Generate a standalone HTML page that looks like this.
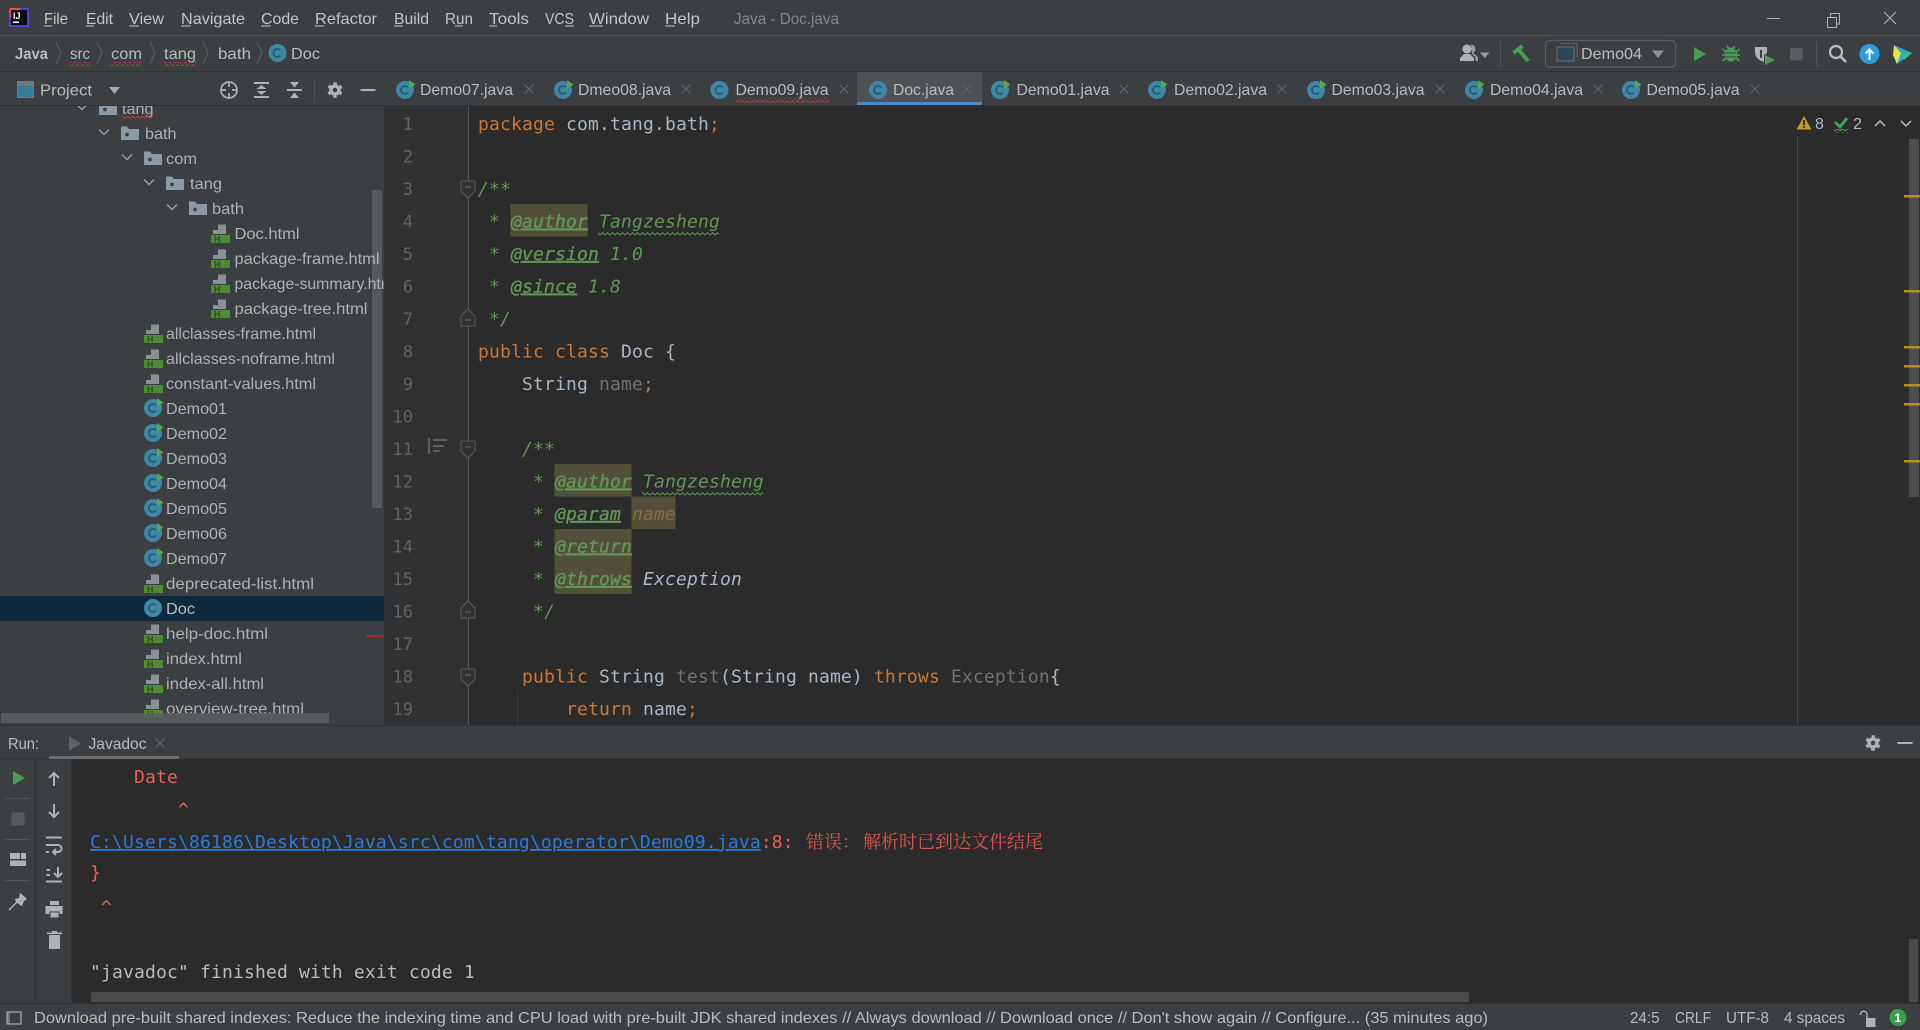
<!DOCTYPE html>
<html lang="en">
<head>
<meta charset="utf-8">
<title>Java - Doc.java</title>
<style>
html,body{margin:0;padding:0;width:1920px;height:1030px;overflow:hidden;background:#3c3f41}
svg{display:block;position:absolute;left:0;top:0}
text{font-family:"Liberation Sans","Noto Sans CJK SC",sans-serif;font-size:16px;fill:#bbbbbb;white-space:pre}
.m{fill:#c2c4c6}
.tr{fill:#afb1b3}
.hh{font-size:9px;font-weight:bold;fill:#2c4f20}
.code,.code tspan{font-family:"DejaVu Sans Mono","Liberation Mono",monospace;font-size:18px;letter-spacing:.16px}
.code{fill:#a9b7c6}
.k{fill:#cc7832}
.d{fill:#629755;font-style:italic}
.tag{fill:#629755;font-style:italic;stroke:#629755;stroke-width:.35px;text-decoration:underline}
.g{fill:#6f7275}
.ln{font-family:"DejaVu Sans Mono","Liberation Mono",monospace;font-size:17px;fill:#606366;text-anchor:end}
.red,.red tspan{fill:#f55b55}
.link{fill:#287bde;text-decoration:underline}
</style>
</head>
<body>
<svg width="1920" height="1030" viewBox="0 0 1920 1030" xmlns="http://www.w3.org/2000/svg">
<defs>
<g id="c"><circle r="9" fill="#3e87a6"/><path d="M3,-2.6A4,4 0 1 0 3,2.6" fill="none" stroke="#2a5a70" stroke-width="1.8"/></g>
<g id="cr"><circle r="9" fill="#3e87a6"/><path d="M3,-2.6A4,4 0 1 0 3,2.6" fill="none" stroke="#2a5a70" stroke-width="1.8"/><path d="M4,-10L10.500,-5.500L4,-1Z" fill="#5aa74a"/></g>
<g id="h"><path d="M2,1V-3L7,-8.500H15V1Z" fill="#8a9094"/><path d="M7,-8.500L7,-3L2,-3Z" fill="#3c3f41"/><rect x="0" y="2" width="19" height="8" fill="#4f8a35"/></g>
<g id="f"><path d="M0,-6.500H6L8,-4H18V7H0Z" fill="#8c9aa3"/><circle cx="6" cy="1.500" r="1.900" fill="#3c3f41"/></g>
<path id="ch" d="M-5,-3L0,2L5,-3" fill="none" stroke="#9a9da0" stroke-width="1.500"/>
<path id="x" d="M-4.500,-4.500L4.500,4.500M4.500,-4.500L-4.500,4.500" fill="none" stroke="#5f6365" stroke-width="1.200"/>
<g id="fd"><path d="M-7,-7H7V3L0,10L-7,3Z" fill="#303133" stroke="#55585a"/><path d="M-3,-1H3" stroke="#6a6d70"/></g>
<g id="fu"><path d="M-7,8H7V-2L0,-9L-7,-2Z" fill="#303133" stroke="#55585a"/><path d="M-3,2H3" stroke="#6a6d70"/></g>
<g id="gear"><circle r="4" fill="none" stroke="#afb1b3" stroke-width="3.500"/><circle r="6.400" fill="none" stroke="#afb1b3" stroke-width="2.600" stroke-dasharray="3.350 3.350" transform="rotate(15)"/></g>
<pattern id="wr" width="5" height="4" patternUnits="userSpaceOnUse"><path d="M0,3L2.500,0.700L5,3" fill="none" stroke="#b8403c" stroke-width="1"/></pattern>
<pattern id="wg" width="5" height="4" patternUnits="userSpaceOnUse"><path d="M0,3L2.500,0.700L5,3" fill="none" stroke="#5a9a55" stroke-width="1"/></pattern>
<clipPath id="treeclip"><rect x="0" y="106" width="383.500" height="619"/></clipPath>
<clipPath id="edclip"><rect x="385" y="106" width="1535" height="619"/></clipPath>
</defs>

<!-- base -->
<rect width="1920" height="1030" fill="#3c3f41"/>
<rect y="35" width="1920" height="1" fill="#505355"/>
<rect y="71" width="1920" height="1" fill="#323232"/>

<!-- title bar -->
<rect x="10" y="9" width="18" height="17" fill="#0a0a14"/>
<path d="M10,9H28V26H10Z" fill="none" stroke="#5a4bff" stroke-width="1.500"/>
<path d="M10,9H20" stroke="#f0563c" stroke-width="2"/><path d="M10,9V18" stroke="#e8388c" stroke-width="2"/>
<text x="13" y="19" style="font-size:9px;font-weight:bold;fill:#fff">IJ</text>
<rect x="13" y="21.500" width="6" height="1.500" fill="#fff"/>
<text class="m" x="44" y="24" textLength="24" lengthAdjust="spacingAndGlyphs">File</text>
<text class="m" x="86" y="24" textLength="27" lengthAdjust="spacingAndGlyphs">Edit</text>
<text class="m" x="129" y="24" textLength="35" lengthAdjust="spacingAndGlyphs">View</text>
<text class="m" x="181" y="24" textLength="64" lengthAdjust="spacingAndGlyphs">Navigate</text>
<text class="m" x="261" y="24" textLength="38" lengthAdjust="spacingAndGlyphs">Code</text>
<text class="m" x="315" y="24" textLength="62" lengthAdjust="spacingAndGlyphs">Refactor</text>
<text class="m" x="394" y="24" textLength="35" lengthAdjust="spacingAndGlyphs">Build</text>
<text class="m" x="445" y="24" textLength="28" lengthAdjust="spacingAndGlyphs">Run</text>
<text class="m" x="489" y="24" textLength="40" lengthAdjust="spacingAndGlyphs">Tools</text>
<text class="m" x="545" y="24" textLength="29" lengthAdjust="spacingAndGlyphs">VCS</text>
<text class="m" x="589" y="24" textLength="60" lengthAdjust="spacingAndGlyphs">Window</text>
<text class="m" x="665" y="24" textLength="35" lengthAdjust="spacingAndGlyphs">Help</text>
<g fill="#c2c4c6"><rect x="44" y="25.500" width="8" height="1"/><rect x="86" y="25.500" width="8" height="1"/><rect x="129" y="25.500" width="10" height="1"/><rect x="181" y="25.500" width="10" height="1"/><rect x="261" y="25.500" width="10" height="1"/><rect x="315" y="25.500" width="9" height="1"/><rect x="394" y="25.500" width="9" height="1"/><rect x="455" y="25.500" width="8" height="1"/><rect x="489" y="25.500" width="8" height="1"/><rect x="565" y="25.500" width="9" height="1"/><rect x="589" y="25.500" width="14" height="1"/><rect x="665" y="25.500" width="10" height="1"/></g>
<text x="734" y="24" textLength="105" lengthAdjust="spacingAndGlyphs" style="fill:#85888a">Java - Doc.java</text>
<path d="M1767,18.500H1780" stroke="#aeb0b2" stroke-width="1"/>
<path d="M1827.500,17.500H1836.500V27.500H1827.500ZM1830.500,17V13.500H1839.500V24H1837" fill="none" stroke="#aeb0b2" stroke-width="1"/>
<path d="M1884,12L1896,24M1896,12L1884,24" stroke="#aeb0b2" stroke-width="1.100"/>

<!-- breadcrumb -->
<text x="15" y="59" textLength="33" lengthAdjust="spacingAndGlyphs" style="font-weight:bold;fill:#bbb">Java</text>
<g fill="none" stroke="#5b5e60" stroke-width="1"><path d="M56,42L61,53L56,64"/><path d="M97,42L102,53L97,64"/><path d="M150,42L155,53L150,64"/><path d="M203,42L208,53L203,64"/><path d="M257,42L262,53L257,64"/></g>
<text x="70" y="59" textLength="20" lengthAdjust="spacingAndGlyphs">src</text>
<text x="111" y="59" textLength="31" lengthAdjust="spacingAndGlyphs">com</text>
<text x="164" y="59" textLength="32" lengthAdjust="spacingAndGlyphs">tang</text>
<text x="218" y="59" textLength="33" lengthAdjust="spacingAndGlyphs">bath</text>
<use href="#c" x="277.500" y="53"/>
<text x="291" y="59" textLength="29" lengthAdjust="spacingAndGlyphs">Doc</text>
<rect x="70" y="62" width="20" height="4" fill="url(#wr)"/><rect x="111" y="62" width="31" height="4" fill="url(#wr)"/><rect x="164" y="62" width="32" height="4" fill="url(#wr)"/>

<!-- right toolbar -->
<g fill="#afb1b3"><circle cx="1467" cy="49" r="4.500"/><path d="M1460,61V58L1464,54H1470L1474,58V61Z"/><path d="M1471,44.500A4.500,4.500 0 0 1 1473,53L1478,57V61H1475.500V57L1472,54Z" opacity=".8"/></g>
<path d="M1480,52.500H1489.500L1484.750,58Z" fill="#9a9da0"/>
<rect x="1500" y="42" width="1" height="24" fill="#515456"/>
<path d="M1513.500,53L1522.500,46" stroke="#499c54" stroke-width="4" fill="none"/>
<path d="M1519,50L1528,61" stroke="#499c54" stroke-width="4" fill="none"/>
<rect x="1545.500" y="40.500" width="130" height="26.500" rx="4" fill="none" stroke="#5a5d5f" stroke-width="1.200"/>
<rect x="1557" y="47" width="17" height="14" fill="#2f4656" stroke="#6d7073"/><path d="M1560,43.500H1577V57" fill="none" stroke="#5d6063" stroke-width="1.200"/>
<text x="1581" y="59" textLength="61" lengthAdjust="spacingAndGlyphs">Demo04</text>
<path d="M1652,50.500H1664L1658,58Z" fill="#8f9295"/>
<path d="M1694,47L1706,54L1694,61Z" fill="#499c54"/>
<path d="M1722.500,49L1726,52M1739.500,49L1736,52M1722,55H1726M1740,55H1736M1722.500,61L1726,58M1739.500,61L1736,58M1727,46L1729,48.500M1735,46L1733,48.500" stroke="#499c54" stroke-width="1.800" fill="none"/>
<ellipse cx="1731" cy="54.500" rx="6" ry="7" fill="#499c54"/>
<path d="M1726,53H1736M1726,57H1736" stroke="#3c3f41" stroke-width="1"/>
<path d="M1755,47H1767V53L1764,55V62C1758,60 1755,57 1755,52Z" fill="#afb1b3"/>
<rect x="1760" y="50" width="2" height="8" fill="#3c3f41"/>
<path d="M1765,55L1775,60L1765,65Z" fill="#499c54"/>
<rect x="1790" y="48" width="12.500" height="12.500" fill="#5a5d5f"/>
<rect x="1816" y="42" width="1" height="24" fill="#515456"/>
<circle cx="1836" cy="52" r="6" fill="none" stroke="#bdbfc1" stroke-width="2.200"/><path d="M1840.500,56.500L1846,62" stroke="#bdbfc1" stroke-width="2.600"/>
<circle cx="1869.500" cy="54" r="10" fill="#2e9bdc"/><path d="M1869.500,60V50M1865.500,53.500L1869.500,49.500L1873.500,53.500" fill="none" stroke="#fff" stroke-width="2"/>
<path d="M1894,45L1912,53L1897,64Z" fill="#2fa8d5"/><path d="M1894,45L1901,53L1897,64L1893,55Z" fill="#e8e04c"/><path d="M1901,53L1912,53L1904,60Z" fill="#2cc18a"/>

<!-- project toolbar -->
<rect x="17.500" y="81.500" width="16" height="16" fill="#3a7a9c" stroke="#75797c"/><rect x="18" y="82" width="15" height="3.500" fill="#75797c"/>
<text x="40" y="95.500" textLength="52" lengthAdjust="spacingAndGlyphs">Project</text>
<path d="M109,87H120L114.500,94Z" fill="#a9acae"/>
<circle cx="229" cy="90" r="8" fill="none" stroke="#afb1b3" stroke-width="1.700"/><path d="M229,82V87M229,93V98M221,90H226M232,90H237" stroke="#afb1b3" stroke-width="1.700"/>
<g fill="#afb1b3"><rect x="254" y="82" width="15" height="2"/><rect x="254" y="96" width="15" height="2"/><path d="M256.500,89L261.500,85L266.500,89ZM256.500,91L261.500,95L266.500,91Z"/><rect x="287" y="89" width="15" height="2"/><path d="M290,82L294.500,87.500L299,82ZM290,98L294.500,92.500L299,98Z"/></g>
<rect x="314" y="79" width="1" height="23" fill="#505355"/>
<use href="#gear" x="335" y="90"/>
<rect x="360.500" y="89" width="15" height="2" fill="#afb1b3"/>

<!-- tabs -->
<rect x="857" y="72" width="125" height="33" fill="#4e5254"/>
<rect x="857" y="102" width="125" height="3" fill="#4a88c7"/>
<rect y="105" width="1920" height="1" fill="#323232"/>
<use href="#cr" x="405" y="90"/><text x="420" y="95" textLength="93" lengthAdjust="spacingAndGlyphs">Demo07.java</text><use href="#x" x="529" y="89"/>
<use href="#cr" x="563" y="90"/><text x="578" y="95" textLength="93" lengthAdjust="spacingAndGlyphs">Dmeo08.java</text><use href="#x" x="686" y="89"/>
<use href="#c" x="719.500" y="90"/><text x="735.500" y="95" textLength="93" lengthAdjust="spacingAndGlyphs">Demo09.java</text><use href="#x" x="844" y="89"/>
<rect x="736" y="98.500" width="93" height="4" fill="url(#wr)"/>
<use href="#c" x="878" y="90"/><text x="893" y="95" textLength="61" lengthAdjust="spacingAndGlyphs">Doc.java</text><use href="#x" x="967" y="89"/>
<use href="#cr" x="1000" y="90"/><text x="1016.500" y="95" textLength="93" lengthAdjust="spacingAndGlyphs">Demo01.java</text><use href="#x" x="1124" y="89"/>
<use href="#cr" x="1157" y="90"/><text x="1174" y="95" textLength="93" lengthAdjust="spacingAndGlyphs">Demo02.java</text><use href="#x" x="1282" y="89"/>
<use href="#cr" x="1316" y="90"/><text x="1331.500" y="95" textLength="93" lengthAdjust="spacingAndGlyphs">Demo03.java</text><use href="#x" x="1440" y="89"/>
<use href="#cr" x="1474" y="90"/><text x="1490" y="95" textLength="93" lengthAdjust="spacingAndGlyphs">Demo04.java</text><use href="#x" x="1598" y="89"/>
<use href="#cr" x="1631" y="90"/><text x="1646.500" y="95" textLength="93" lengthAdjust="spacingAndGlyphs">Demo05.java</text><use href="#x" x="1755" y="89"/>

<!-- project tree -->
<rect y="596" width="384" height="25" fill="#0d293e"/>
<rect x="372" y="190" width="10" height="318" fill="#58595a"/>
<rect x="366" y="635" width="17" height="2" fill="#a5282a"/>
<g clip-path="url(#treeclip)"><g transform="translate(0,-.5)">
<use href="#ch" x="82" y="108"/><use href="#f" x="99" y="108.500"/><text class="tr" x="122" y="114.500" textLength="31.500" lengthAdjust="spacingAndGlyphs">tang</text>
<rect x="122" y="116" width="31" height="4" fill="url(#wr)"/>
<use href="#ch" x="104" y="133"/><use href="#f" x="121" y="133.500"/><text class="tr" x="145" y="139.500" textLength="31.500" lengthAdjust="spacingAndGlyphs">bath</text>
<use href="#ch" x="127" y="158"/><use href="#f" x="144" y="158.500"/><text class="tr" x="166" y="164.500" textLength="31" lengthAdjust="spacingAndGlyphs">com</text>
<use href="#ch" x="149" y="183"/><use href="#f" x="166" y="183.500"/><text class="tr" x="190" y="189.500" textLength="32" lengthAdjust="spacingAndGlyphs">tang</text>
<use href="#ch" x="172" y="208"/><use href="#f" x="189" y="208.500"/><text class="tr" x="212" y="214.500" textLength="32" lengthAdjust="spacingAndGlyphs">bath</text>

<use href="#h" x="211" y="233.500"/><text class="hh" x="214" y="243">H</text><text class="tr" x="234.500" y="239.500" textLength="65" lengthAdjust="spacingAndGlyphs">Doc.html</text>
<use href="#h" x="211" y="258.500"/><text class="hh" x="214" y="268">H</text><text class="tr" x="234.500" y="264.500" textLength="145" lengthAdjust="spacingAndGlyphs">package-frame.html</text>
<use href="#h" x="211" y="283.500"/><text class="hh" x="214" y="293">H</text><text class="tr" x="234.500" y="289.500" textLength="163" lengthAdjust="spacingAndGlyphs">package-summary.html</text>
<use href="#h" x="211" y="308.500"/><text class="hh" x="214" y="318">H</text><text class="tr" x="234.500" y="314.500" textLength="133" lengthAdjust="spacingAndGlyphs">package-tree.html</text>

<use href="#h" x="144" y="333.500"/><text class="hh" x="147" y="343">H</text><text class="tr" x="166" y="339.500" textLength="150" lengthAdjust="spacingAndGlyphs">allclasses-frame.html</text>
<use href="#h" x="144" y="358.500"/><text class="hh" x="147" y="368">H</text><text class="tr" x="166" y="364.500" textLength="169" lengthAdjust="spacingAndGlyphs">allclasses-noframe.html</text>
<use href="#h" x="144" y="383.500"/><text class="hh" x="147" y="393">H</text><text class="tr" x="166" y="389.500" textLength="150" lengthAdjust="spacingAndGlyphs">constant-values.html</text>

<use href="#cr" x="153" y="408.500"/><text class="tr" x="166" y="414.500" textLength="61" lengthAdjust="spacingAndGlyphs">Demo01</text>
<use href="#cr" x="153" y="433.500"/><text class="tr" x="166" y="439.500" textLength="61" lengthAdjust="spacingAndGlyphs">Demo02</text>
<use href="#cr" x="153" y="458.500"/><text class="tr" x="166" y="464.500" textLength="61" lengthAdjust="spacingAndGlyphs">Demo03</text>
<use href="#cr" x="153" y="483.500"/><text class="tr" x="166" y="489.500" textLength="61" lengthAdjust="spacingAndGlyphs">Demo04</text>
<use href="#cr" x="153" y="508.500"/><text class="tr" x="166" y="514.500" textLength="61" lengthAdjust="spacingAndGlyphs">Demo05</text>
<use href="#cr" x="153" y="533.500"/><text class="tr" x="166" y="539.500" textLength="61" lengthAdjust="spacingAndGlyphs">Demo06</text>
<use href="#cr" x="153" y="558.500"/><text class="tr" x="166" y="564.500" textLength="61" lengthAdjust="spacingAndGlyphs">Demo07</text>

<use href="#h" x="144" y="583.500"/><text class="hh" x="147" y="593">H</text><text class="tr" x="166" y="589.500" textLength="148" lengthAdjust="spacingAndGlyphs">deprecated-list.html</text>
<use href="#c" x="153" y="608.500"/><text x="166" y="614.500" textLength="29" lengthAdjust="spacingAndGlyphs">Doc</text>
<use href="#h" x="144" y="633.500"/><text class="hh" x="147" y="643">H</text><text class="tr" x="166" y="639.500" textLength="102" lengthAdjust="spacingAndGlyphs">help-doc.html</text>
<use href="#h" x="144" y="658.500"/><text class="hh" x="147" y="668">H</text><text class="tr" x="166" y="664.500" textLength="76" lengthAdjust="spacingAndGlyphs">index.html</text>
<use href="#h" x="144" y="683.500"/><text class="hh" x="147" y="693">H</text><text class="tr" x="166" y="689.500" textLength="98" lengthAdjust="spacingAndGlyphs">index-all.html</text>
<use href="#h" x="144" y="708.500"/><text class="hh" x="147" y="718">H</text><text class="tr" x="166" y="714.500" textLength="138" lengthAdjust="spacingAndGlyphs">overview-tree.html</text>
</g></g>
<rect x="1" y="713" width="328" height="10" fill="#5c5d5e" opacity=".88"/>

<!-- editor -->
<rect x="384" y="106" width="1536" height="619" fill="#2b2b2b"/>
<rect x="384" y="106" width="84" height="619" fill="#303133"/>
<rect x="468" y="106" width="1" height="619" fill="#55585a"/>
<g transform="translate(0,1)">
<text class="ln" x="413" y="129">1</text><text class="ln" x="413" y="161.500">2</text><text class="ln" x="413" y="194">3</text><text class="ln" x="413" y="226.500">4</text><text class="ln" x="413" y="259">5</text><text class="ln" x="413" y="291.500">6</text><text class="ln" x="413" y="324">7</text><text class="ln" x="413" y="356.500">8</text><text class="ln" x="413" y="389">9</text><text class="ln" x="413" y="421.500">10</text><text class="ln" x="413" y="454">11</text><text class="ln" x="413" y="486.500">12</text><text class="ln" x="413" y="519">13</text><text class="ln" x="413" y="551.500">14</text><text class="ln" x="413" y="584">15</text><text class="ln" x="413" y="616.500">16</text><text class="ln" x="413" y="649">17</text><text class="ln" x="413" y="681.500">18</text><text class="ln" x="413" y="714">19</text>
</g>
<use href="#fd" x="468" y="188"/><use href="#fu" x="468" y="318"/><use href="#fd" x="468" y="448"/><use href="#fu" x="468" y="610"/><use href="#fd" x="468" y="676"/>
<path d="M429,438V454" stroke="#606366" stroke-width="2"/><path d="M433,440H447M433,446H444M433,451H440" stroke="#606366" stroke-width="2"/>
<rect x="517" y="692" width="1" height="33" fill="#3b3b3b"/>
<rect x="1797" y="136" width="1" height="589" fill="#444648"/>

<g fill="#52503a">
<rect x="510.500" y="204" width="77" height="32.500"/>
<rect x="554.500" y="464" width="77" height="32.500"/>
<rect x="631.500" y="496.500" width="44" height="32.500"/>
<rect x="554.500" y="529" width="77" height="65"/>
</g>

<g clip-path="url(#edclip)"><g transform="translate(0,1)">
<text class="code" x="478" y="129"><tspan class="k">package</tspan> com.tang.bath<tspan class="k">;</tspan></text>
<text class="code" x="478" y="194"><tspan class="d">/**</tspan></text>
<text class="code" x="478" y="226.500"><tspan class="d"> * </tspan><tspan class="tag">@author</tspan><tspan class="d"> Tangzesheng</tspan></text>
<text class="code" x="478" y="259"><tspan class="d"> * </tspan><tspan class="tag">@version</tspan><tspan class="d"> 1.0</tspan></text>
<text class="code" x="478" y="291.500"><tspan class="d"> * </tspan><tspan class="tag">@since</tspan><tspan class="d"> 1.8</tspan></text>
<text class="code" x="478" y="324"><tspan class="d"> */</tspan></text>
<text class="code" x="478" y="356.500"><tspan class="k">public class</tspan> Doc {</text>
<text class="code" x="478" y="389">    String <tspan class="g">name</tspan><tspan class="k">;</tspan></text>
<text class="code" x="478" y="454"><tspan class="d">    /**</tspan></text>
<text class="code" x="478" y="486.500"><tspan class="d">     * </tspan><tspan class="tag">@author</tspan><tspan class="d"> Tangzesheng</tspan></text>
<text class="code" x="478" y="519"><tspan class="d">     * </tspan><tspan class="tag">@param</tspan><tspan class="d"> </tspan><tspan style="fill:#8f6a3a;font-style:italic">name</tspan></text>
<text class="code" x="478" y="551.500"><tspan class="d">     * </tspan><tspan class="tag">@return</tspan></text>
<text class="code" x="478" y="584"><tspan class="d">     * </tspan><tspan class="tag">@throws</tspan> <tspan style="font-style:italic">Exception</tspan></text>
<text class="code" x="478" y="616.500"><tspan class="d">     */</tspan></text>
<text class="code" x="478" y="681.500">    <tspan class="k">public</tspan> String <tspan class="g">test</tspan>(String name) <tspan class="k">throws</tspan> <tspan class="g">Exception</tspan>{</text>
<text class="code" x="478" y="714">        <tspan class="k">return</tspan> name<tspan class="k">;</tspan></text>
</g></g>
<rect x="598" y="232" width="121" height="4" fill="url(#wg)"/>
<rect x="642" y="492" width="121" height="4" fill="url(#wg)"/>

<!-- inspections -->
<path d="M1804,116L1811.500,129.500H1796.500Z" fill="#c79a1e"/><rect x="1803" y="120" width="2" height="5" fill="#2b2b2b"/><rect x="1803" y="126" width="2" height="2" fill="#2b2b2b"/>
<text x="1815" y="129" style="fill:#a9b7c6;font-size:16px">8</text>
<path d="M1835,122L1840,127L1847,118" fill="none" stroke="#499c54" stroke-width="3"/>
<rect x="1834" y="129" width="14" height="4" fill="url(#wg)"/>
<text x="1853" y="129" style="fill:#a9b7c6;font-size:16px">2</text>
<path d="M1875,126L1880,121L1885,126" fill="none" stroke="#afb1b3" stroke-width="1.600"/>
<path d="M1901,121L1906,126L1911,121" fill="none" stroke="#afb1b3" stroke-width="1.600"/>
<rect x="1909" y="139" width="10" height="358" fill="#4d4d4d"/>
<g fill="#b8901f"><rect x="1904" y="195" width="16" height="2.500"/><rect x="1904" y="290" width="16" height="2.500"/><rect x="1904" y="346" width="16" height="2.500"/><rect x="1904" y="365" width="16" height="2.500"/><rect x="1904" y="384" width="16" height="2.500"/><rect x="1904" y="403" width="16" height="2.500"/><rect x="1904" y="460" width="16" height="2.500"/></g>

<!-- run header -->
<rect y="725" width="1920" height="1" fill="#323232"/>
<rect y="758.500" width="1920" height="1" fill="#323232"/>
<text x="8" y="749" textLength="31" lengthAdjust="spacingAndGlyphs">Run:</text>
<path d="M69,736L81,743.500L69,751Z" fill="#5f6265"/>
<text x="88.500" y="749" textLength="58" lengthAdjust="spacingAndGlyphs">Javadoc</text>
<use href="#x" x="160" y="743"/>
<rect x="49" y="756" width="130" height="3" fill="#6a6d72"/>
<use href="#gear" x="1873" y="743"/>
<rect x="1897.500" y="742" width="15" height="2" fill="#afb1b3"/>

<!-- console -->
<rect x="71.500" y="759" width="1848.500" height="244" fill="#2b2b2b"/>
<rect x="35" y="759" width="1" height="244" fill="#323232"/>
<path d="M13,771L25,778L13,785Z" fill="#499c54"/>
<rect x="5" y="798" width="25" height="1" fill="#515456"/>
<rect x="11.500" y="812.500" width="13" height="13" fill="#56595b"/>
<rect x="5" y="839" width="25" height="1" fill="#515456"/>
<g fill="#afb1b3"><rect x="10" y="853" width="10" height="6"/><rect x="21" y="853" width="5" height="6"/><rect x="10" y="860.500" width="16" height="5.500"/></g>
<rect x="5" y="880" width="25" height="1" fill="#515456"/>
<path d="M20,892.500L27,899L24,901L22,906L20,905L16,902L15,899L19,898Z" fill="#afb1b3"/><path d="M17,902L9,910" stroke="#afb1b3" stroke-width="1.500"/>
<g fill="none" stroke="#afb1b3" stroke-width="2"><path d="M54,786V773M49,778L54,773L59,778"/><path d="M54,804V817M49,812L54,817L59,812"/><path d="M46,837.500H62M46,845H58A3.500,3.500 0 0 1 58,852H54M56,849L53,852L56,855M46,852H49"/><path d="M46.500,870H50M46.500,875H50M58,867V877M54,873L58,877L62,873M46,881.500H62"/></g>
<g fill="#afb1b3"><rect x="50" y="901" width="9" height="4"/><rect x="45.500" y="906" width="17" height="8"/><rect x="50" y="912" width="9" height="6" stroke="#3c3f41"/><rect x="49" y="935" width="11" height="14"/><rect x="47" y="932.500" width="15" height="1.600"/><rect x="52" y="931" width="5" height="1.600"/></g>

<text class="code red" x="90" y="783">    Date</text>
<text class="code red" x="90" y="815.500">        ^</text>
<text class="code" x="90" y="848"><tspan class="link">C:\Users\86186\Desktop\Java\src\com\tang\operator\Demo09.java</tspan><tspan style="fill:#f55b55">:8:</tspan></text>
<text x="806" y="848" style="font-family:'Liberation Serif','Noto Serif CJK SC',serif;font-size:18px;fill:#e2544f">错误：</text>
<text x="863" y="848" style="font-family:'Liberation Serif','Noto Serif CJK SC',serif;font-size:18px;fill:#e2544f">解析时已到达文件结尾</text>
<text class="code red" x="90" y="878.500">}</text>
<text class="code red" x="90" y="913"> ^</text>
<text class="code" x="90" y="978" style="fill:#bbbbbb">"javadoc" finished with exit code 1</text>
<rect x="91" y="992" width="1378" height="10" fill="#4a4a4a"/>
<rect x="1909" y="939" width="9" height="63" fill="#4a4a4a"/>

<!-- status bar -->
<rect y="1003" width="1920" height="1" fill="#323232"/>
<rect x="7" y="1012" width="14" height="12" fill="none" stroke="#a9acae" stroke-width="1.200"/><rect x="7" y="1012" width="3" height="12" fill="#a9acae" opacity=".5"/>
<text x="34" y="1023" textLength="1454" lengthAdjust="spacingAndGlyphs">Download pre-built shared indexes: Reduce the indexing time and CPU load with pre-built JDK shared indexes // Always download // Download once // Don't show again // Configure... (35 minutes ago)</text>
<text x="1630" y="1023" textLength="29.500" lengthAdjust="spacingAndGlyphs">24:5</text>
<text x="1675" y="1023" textLength="36" lengthAdjust="spacingAndGlyphs">CRLF</text>
<text x="1726" y="1023" textLength="43" lengthAdjust="spacingAndGlyphs">UTF-8</text>
<text x="1784" y="1023" textLength="61" lengthAdjust="spacingAndGlyphs">4 spaces</text>
<rect x="1866" y="1018" width="9.500" height="9" fill="#afb1b3"/>
<path d="M1860.500,1015V1014A3.300,3.300 0 0 1 1867,1014V1018" fill="none" stroke="#afb1b3" stroke-width="1.500"/>
<circle cx="1898" cy="1017.500" r="8.500" fill="#3d9c4d"/>
<text x="1894.500" y="1022" style="font-size:12px;font-weight:bold;fill:#fff">1</text>
</svg>
</body>
</html>
